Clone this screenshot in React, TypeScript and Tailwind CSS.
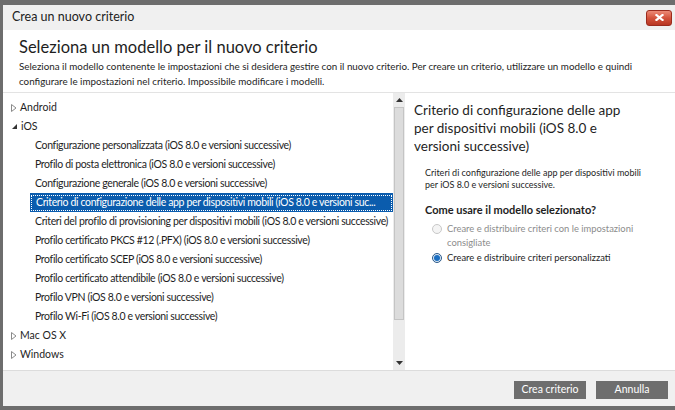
import React from "react";

const font = { fontFamily: 'Lato, "Open Sans", sans-serif' };

const iosItems = [
  "Configurazione personalizzata (iOS 8.0 e versioni successive)",
  "Profilo di posta elettronica (iOS 8.0 e versioni successive)",
  "Configurazione generale (iOS 8.0 e versioni successive)",
  "Criterio di configurazione delle app per dispositivi mobili (iOS 8.0 e versioni suc...",
  "Criteri del profilo di provisioning per dispositivi mobili (iOS 8.0 e versioni successive)",
  "Profilo certificato PKCS #12 (.PFX) (iOS 8.0 e versioni successive)",
  "Profilo certificato SCEP (iOS 8.0 e versioni successive)",
  "Profilo certificato attendibile (iOS 8.0 e versioni successive)",
  "Profilo VPN (iOS 8.0 e versioni successive)",
  "Profilo Wi-Fi (iOS 8.0 e versioni successive)",
];

function Collapsed() {
  return (
    <svg width="6" height="8" viewBox="0 0 6 8" className="mr-[3px]">
      <path d="M0.5 0.5 L5 4 L0.5 7.5 Z" fill="none" stroke="#8a8a8a" />
    </svg>
  );
}

function Expanded() {
  return (
    <svg width="7" height="7" viewBox="0 0 7 7" className="mr-[3px]">
      <path d="M6 1 L6 6 L1 6 Z" fill="#333" />
    </svg>
  );
}

function Group({ label, open }: { label: string; open?: boolean }) {
  return (
    <div className="flex h-[19px] items-center whitespace-nowrap pl-[8px] text-[10.5px] text-[#1e1e1e]">
      {open ? <Expanded /> : <Collapsed />}
      <span>{label}</span>
    </div>
  );
}

export default function App() {
  return (
    <div className="h-[410px] w-[675px] overflow-hidden bg-[#6d6d6d] pl-[3px] pt-[5px]" style={font}>
      <div className="flex h-[401px] flex-col bg-white">
        {/* title bar */}
        <div className="flex h-[25px] shrink-0 items-center justify-between bg-[#f0f0f0] pl-[9px] pr-[3px]">
          <span className="text-[12.5px] text-[#222]">Crea un nuovo criterio</span>
          <div className="flex h-[16px] w-[26px] items-center justify-center rounded-[3px] border border-[#9b2b1e] bg-gradient-to-b from-[#ec8a76] via-[#d4533c] to-[#b83622]">
            <svg width="9" height="7" viewBox="0 0 9 7">
              <path d="M1.5 1 L7.5 6 M7.5 1 L1.5 6" stroke="white" strokeWidth="2.2" strokeLinecap="square" />
            </svg>
          </div>
        </div>

        {/* header */}
        <div className="h-[63px] shrink-0 border-b border-[#e3e3e3] px-[16px] pt-[6px]">
          <div className="whitespace-nowrap text-[16.5px] leading-[22px] text-[#1e1e1e]">Seleziona un modello per il nuovo criterio</div>
          <div className="mt-[1px] whitespace-nowrap text-[9.8px] leading-[15px] text-[#1e1e1e]">
            Seleziona il modello contenente le impostazioni che si desidera gestire con il nuovo criterio. Per creare un criterio, utilizzare un modello e quindi
            <br />
            configurare le impostazioni nel criterio. Impossibile modificare i modelli.
          </div>
        </div>

        {/* main */}
        <div className="flex h-[277px] shrink-0">
          <div className="flex w-[402px]">
            <div className="w-[390px] pt-[5px]">
              <Group label="Android" />
              <Group label="iOS" open />
              {iosItems.map((t, i) =>
                i === 3 ? (
                  <div key={t} className="ml-[27px] flex h-[19px] items-center bg-[#0b5cad] px-[1px] text-[10.5px] tracking-[-0.35px] text-white">
                    <div className="flex h-[16px] w-full items-center whitespace-nowrap border border-dotted border-white pl-[4px]">{t}</div>
                  </div>
                ) : (
                  <div key={t} className="flex h-[19px] items-center whitespace-nowrap pl-[32px] text-[10.5px] tracking-[-0.35px] text-[#1e1e1e]">
                    {t}
                  </div>
                )
              )}
              <Group label="Mac OS X" />
              <Group label="Windows" />
            </div>
            {/* scrollbar */}
            <div className="flex w-[12px] flex-col items-center bg-[#ececec]">
              <div className="flex h-[14px] items-center">
                <svg width="7" height="4" viewBox="0 0 7 4"><path d="M0 4 L3.5 0 L7 4 Z" fill="#333" /></svg>
              </div>
              <div className="h-[213px] w-[10px] border border-[#c4c4c4] bg-[#dcdcdc]" />
              <div className="flex-1" />
              <div className="flex h-[14px] items-center">
                <svg width="7" height="4" viewBox="0 0 7 4"><path d="M0 0 L3.5 4 L7 0 Z" fill="#333" /></svg>
              </div>
            </div>
          </div>

          <div className="flex-1 pl-[9px] pr-[10px] pt-[8px]">
            <div className="whitespace-nowrap text-[13.5px] leading-[18px] text-[#1e1e1e]">
              Criterio di configurazione delle app
              <br />
              per dispositivi mobili (iOS 8.0 e
              <br />
              versioni successive)
            </div>
            <div className="mt-[12px] whitespace-nowrap pl-[11px] text-[9px] leading-[12px] text-[#1e1e1e]">
              Criteri di configurazione delle app per dispositivi mobili
              <br />
              per iOS 8.0 e versioni successive.
            </div>
            <div className="mt-[12px] pl-[11px] text-[11px] font-bold leading-[14px] text-[#1e1e1e]">Come usare il modello selezionato?</div>
            <div className="mt-[5px] flex pl-[18px] text-[9.4px] leading-[14px] text-[#8c8c8c]">
              <div className="mr-[5px] mt-[2px] h-[10px] w-[10px] shrink-0 rounded-full border border-[#c8c8c8] bg-[#f4f4f4]" />
              <div className="whitespace-nowrap">
                Creare e distribuire criteri con le impostazioni
                <br />
                consigliate
              </div>
            </div>
            <div className="mt-[1px] flex items-center whitespace-nowrap pl-[18px] text-[9.4px] leading-[14px] text-[#1e1e1e]">
              <div className="mr-[5px] flex h-[10px] w-[10px] shrink-0 items-center justify-center rounded-full border border-[#2c5a8a] bg-[#dbe8f5]">
                <div className="h-[6px] w-[6px] rounded-full bg-[#1b6fc2]" />
              </div>
              Creare e distribuire criteri personalizzati
            </div>
          </div>
        </div>

        {/* footer */}
        <div className="flex flex-1 items-start justify-end gap-[10px] border-t border-[#dcdcdc] bg-[#f0f0f0] pr-[7px] pt-[10px]">
          <button className="h-[18px] w-[72px] bg-[#6e6e6e] text-[10.5px] text-white">Crea criterio</button>
          <button className="h-[18px] w-[72px] bg-[#6e6e6e] text-[10.5px] text-white">Annulla</button>
        </div>
      </div>
    </div>
  );
}
